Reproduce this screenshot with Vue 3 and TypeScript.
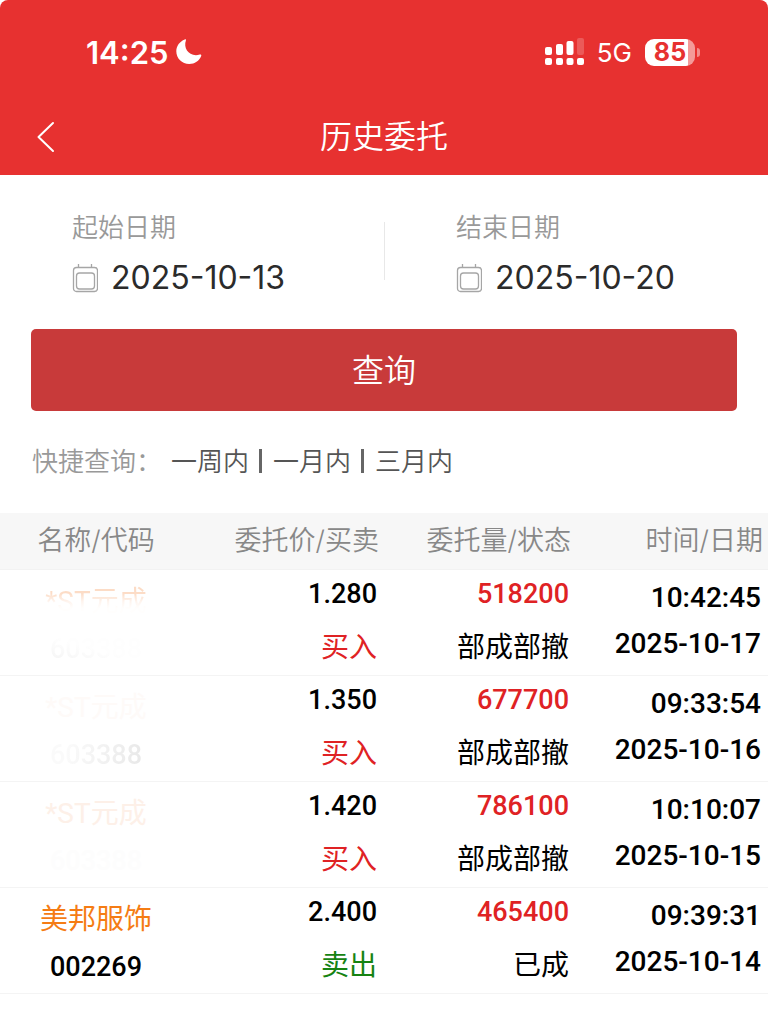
<script setup lang="ts">
import { ref } from 'vue'

interface Order {
  name: string
  code: string
  fade: string
  price: string
  side: 'buy' | 'sell'
  amount: string
  status: string
  time: string
  date: string
}

const startDate = ref('2025-10-13')
const endDate = ref('2025-10-20')
const ranges: string[] = ['一周内', '一月内', '三月内']

const orders: Order[] = [
  { name: '*ST元成', code: '603388', fade: 'fade-a', price: '1.280', side: 'buy', amount: '518200', status: '部成部撤', time: '10:42:45', date: '2025-10-17' },
  { name: '*ST元成', code: '603388', fade: 'fade-b', price: '1.350', side: 'buy', amount: '677700', status: '部成部撤', time: '09:33:54', date: '2025-10-16' },
  { name: '*ST元成', code: '603388', fade: 'fade-c', price: '1.420', side: 'buy', amount: '786100', status: '部成部撤', time: '10:10:07', date: '2025-10-15' },
  { name: '美邦服饰', code: '002269', fade: '', price: '2.400', side: 'sell', amount: '465400', status: '已成', time: '09:39:31', date: '2025-10-14' },
]
</script>

<template>
  <div class="screen">
    <header class="top">
      <div class="status">
        <span class="clock">14:25</span>
        <svg class="moon" width="28" height="28" viewBox="0 0 28 28" aria-hidden="true">
          <path d="M9.800 1.500C10.600 1.100 11.200 1.700 10.900 2.500C8 10.500 14.500 19.500 24.800 16.600C26 16.300 26.600 17 26.200 18C24.300 22.900 19.700 26 14.300 26C7 26 1.300 20.400 1.300 13.300C1.300 8 4.700 3.400 9.800 1.500Z" fill="#fff" />
        </svg>
        <span class="spacer"></span>
        <svg class="signal" width="40" height="28" viewBox="0 0 40 28" fill="#fff" aria-hidden="true">
          <rect x="0" y="9" width="7" height="8" rx="2" />
          <rect x="11" y="6" width="7" height="11" rx="2" />
          <rect x="21.500" y="3" width="7" height="14" rx="2" />
          <rect x="32" y="0" width="7" height="17" rx="2" opacity=".2" />
          <rect x="0" y="20" width="7" height="7" rx="2" />
          <rect x="11" y="20" width="7" height="7" rx="2" />
          <rect x="21.500" y="20" width="7" height="7" rx="2" />
          <rect x="32" y="20" width="7" height="7" rx="2" />
        </svg>
        <span class="network">5G</span>
        <span class="battery">85</span>
        <span class="battery-tip"></span>
      </div>
      <nav class="nav">
        <button class="back" type="button" aria-label="返回">
          <svg width="20" height="32" viewBox="0 0 20 32" aria-hidden="true">
            <path d="M18 2L3.500 16L18 30" fill="none" stroke="#fff" stroke-width="2" stroke-linecap="round" stroke-linejoin="round" />
          </svg>
        </button>
        <h1 class="title">历史委托</h1>
      </nav>
    </header>

    <main>
      <form @submit.prevent>
        <div class="dates">
          <div class="field">
            <label for="start">起始日期</label>
            <div class="value">
              <svg class="calendar" width="26" height="30" viewBox="0 0 26 30" fill="none" stroke="#a6a6a6" aria-hidden="true">
                <rect x="1.500" y="4.500" width="24" height="24" rx="3" stroke-width="1.300" />
                <rect x="4.500" y="10" width="18" height="16" rx="3" stroke-width="1.300" />
                <path d="M6.500 1V4.500M19.500 1V4.500" stroke-width="1.300" />
              </svg>
              <input id="start" v-model="startDate" type="text" />
            </div>
          </div>
          <div class="field">
            <label for="end">结束日期</label>
            <div class="value">
              <svg class="calendar" width="26" height="30" viewBox="0 0 26 30" fill="none" stroke="#a6a6a6" aria-hidden="true">
                <rect x="1.500" y="4.500" width="24" height="24" rx="3" stroke-width="1.300" />
                <rect x="4.500" y="10" width="18" height="16" rx="3" stroke-width="1.300" />
                <path d="M6.500 1V4.500M19.500 1V4.500" stroke-width="1.300" />
              </svg>
              <input id="end" v-model="endDate" type="text" />
            </div>
          </div>
        </div>
        <button class="query" type="submit">查询</button>
      </form>

      <div class="quick">
        <span class="quick-label">快捷查询：</span>
        <button v-for="range in ranges" :key="range" class="range" type="button">{{ range }}</button>
      </div>

      <table class="orders">
        <thead>
          <tr>
            <th scope="col">名称/代码</th>
            <th scope="col">委托价/买卖</th>
            <th scope="col">委托量/状态</th>
            <th scope="col">时间/日期</th>
          </tr>
        </thead>
        <tbody>
          <tr v-for="order in orders" :key="order.date">
            <td class="stock" :class="order.fade">
              <div><span class="name">{{ order.name }}</span></div>
              <div><span class="code">{{ order.code }}</span></div>
            </td>
            <td>
              <div class="first">{{ order.price }}</div>
              <div class="second" :class="order.side">{{ order.side === 'buy' ? '买入' : '卖出' }}</div>
            </td>
            <td>
              <div class="first buy">{{ order.amount }}</div>
              <div class="second">{{ order.status }}</div>
            </td>
            <td class="when">
              <div>{{ order.time }}</div>
              <div>{{ order.date }}</div>
            </td>
          </tr>
        </tbody>
      </table>
    </main>
  </div>
</template>

<style>
body {
  margin: 0;
  background: #fff;
}
</style>

<style scoped>
.screen {
  min-height: 100vh;
  background: #fff;
  color: #000;
  font-family: Inter, "Noto Sans CJK SC", sans-serif;
}

button,
input {
  padding: 0;
  border: 0;
  background: none;
  font-family: inherit;
}

.top {
  border-radius: 8px 8px 0 0;
  background: #e73130;
  color: #fff;
}

.status {
  display: flex;
  align-items: center;
  height: 92px;
  padding: 6px 68px 0 86px;
}

.clock {
  font-size: 31px;
  font-weight: 600;
}

.moon {
  margin-left: 7px;
}

.spacer {
  flex: 1;
}

.network {
  margin: 0 13px 0 12px;
  font-size: 26px;
}

.battery {
  width: 50px;
  border-radius: 9px;
  background: linear-gradient(to right, #fff 86%, #f49a99 86%);
  color: #e73130;
  font-size: 25px;
  font-weight: 700;
  line-height: 27px;
  text-align: center;
}

.battery-tip {
  width: 3px;
  height: 9px;
  margin-left: 2px;
  border-radius: 0 3px 3px 0;
  background: #f28c8b;
}

.nav {
  display: grid;
  grid-template-columns: 60px 1fr 60px;
  align-items: center;
  height: 77px;
}

.back {
  display: flex;
  height: 100%;
  padding-left: 35px;
  align-items: center;
}

.title {
  margin: 0;
  font-size: 32px;
  font-weight: 350;
  line-height: 44px;
  text-align: center;
}

.dates {
  display: grid;
  grid-template-columns: repeat(2, minmax(0, 1fr));
  padding-top: 33px;
}

.field {
  padding-left: 72px;
}

.field + .field {
  background: linear-gradient(#e8e8e8, #e8e8e8) 0 14px / 1px 58px no-repeat;
}

.field label {
  display: block;
  color: #999;
  font-size: 26px;
  font-weight: 350;
  line-height: 40px;
}

.value {
  display: flex;
  align-items: center;
  gap: 13px;
  height: 59px;
}

.calendar {
  flex: none;
}

.value input {
  flex: 1;
  min-width: 0;
  color: #2b2b2b;
  font-size: 32px;
}

.query {
  display: block;
  width: calc(100% - 62px);
  height: 82px;
  margin: 22px 31px 0;
  padding-bottom: 5px;
  border-radius: 5px;
  background: #c83a3a;
  color: #fff;
  font-size: 32px;
  font-weight: 350;
}

.quick {
  display: flex;
  align-items: center;
  height: 97px;
  padding: 0 0 5px 32px;
  color: #999;
  font-size: 26px;
  font-weight: 350;
}

.quick-label {
  width: 139px;
}

.range {
  color: #555;
  font-size: 26px;
  font-weight: 350;
}

.range + .range::before {
  content: "";
  display: inline-block;
  width: 3px;
  height: 24px;
  margin: 0 11px 0 10px;
  background: #666;
  vertical-align: -2px;
}

.orders {
  width: 100%;
  border-collapse: separate;
  border-spacing: 0;
  table-layout: fixed;
}

th {
  height: 56px;
  padding: 0 5px 0 0;
  border-bottom: 1px solid #f2f2f2;
  background: #f7f7f7;
  color: #888;
  font-size: 27px;
  font-weight: 350;
  line-height: 40px;
  text-align: right;
}

th:first-child {
  padding: 0;
  text-align: center;
}

td {
  height: 105px;
  padding: 0 7px 0 0;
  border-bottom: 1px solid #f4f4f4;
  font-family: Roboto, "Noto Sans CJK SC", sans-serif;
  font-size: 27px;
  font-weight: 500;
  text-align: right;
  vertical-align: top;
}

.first {
  line-height: 48px;
}

.second {
  padding-top: 3px;
  font-size: 28px;
  font-weight: 400;
  line-height: 54px;
}

.buy {
  color: #df2224;
}

.sell {
  color: #168312;
}

.when {
  padding-top: 5px;
  height: 100px;
  font-size: 28px;
  line-height: 46px;
}

.stock {
  height: 97px;
  padding: 8px 0 0;
  line-height: 47px;
  text-align: center;
}

.name {
  color: #f57c14;
  font-size: 28px;
  font-weight: 400;
}

.fade-a .name {
  color: transparent;
  background: linear-gradient(#fcdcc6 25%, #fef4ee 50%, #fffefd 70%);
  background-clip: text;
}

.fade-a .code {
  color: transparent;
  background: linear-gradient(195deg, #fefefe 50%, #f3f3f3);
  background-clip: text;
}

.fade-b .name {
  color: #fefaf8;
}

.fade-b .code {
  color: transparent;
  background: linear-gradient(100deg, #fafafa 20%, #e8e8e8);
  background-clip: text;
}

.fade-c .name {
  color: #fdf0e8;
}

.fade-c .code {
  color: #fdfdfd;
}
</style>
